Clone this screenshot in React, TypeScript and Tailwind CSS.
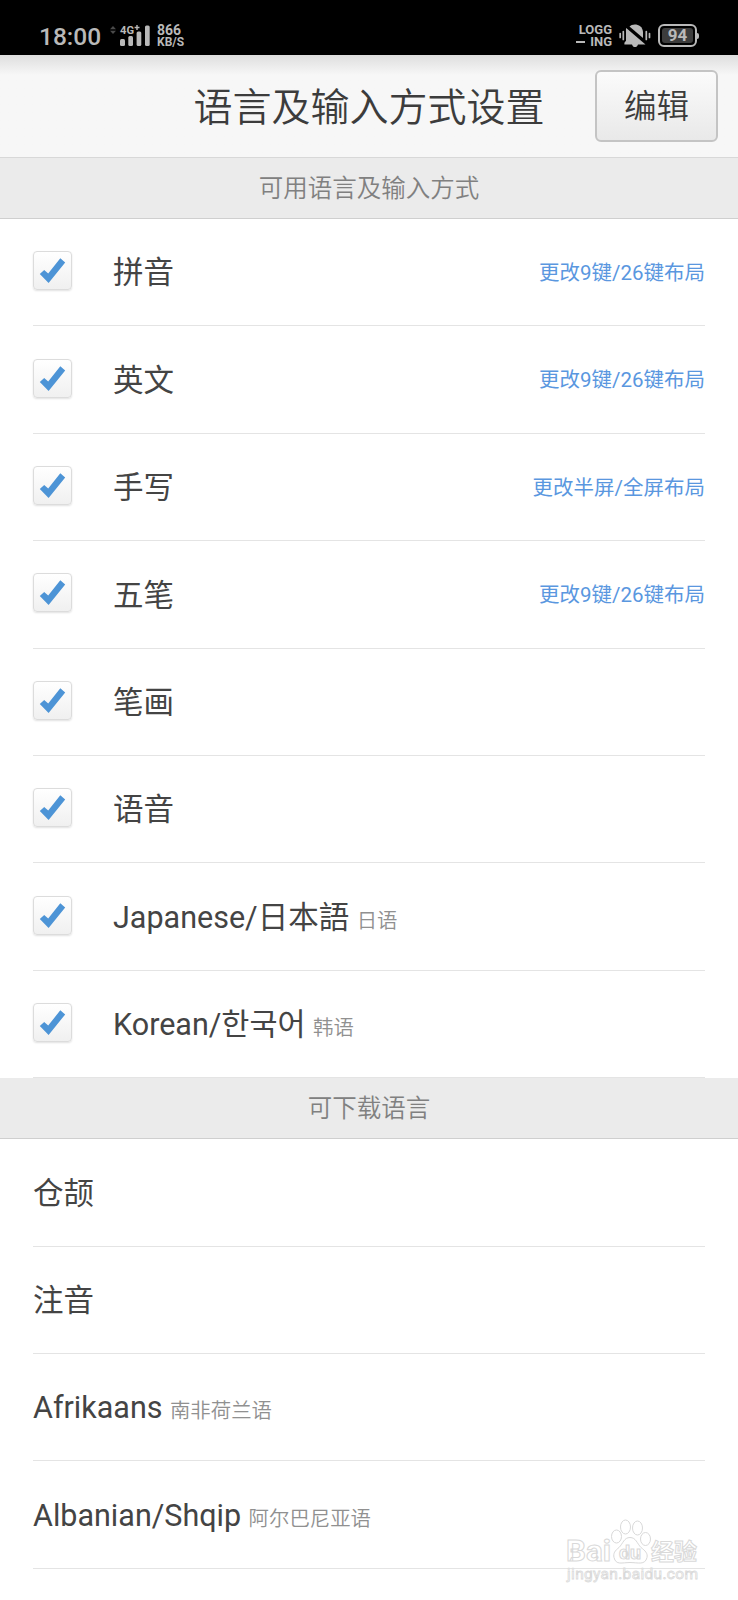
interface Language {
  name: string;
  note?: string;
  action?: string;
}

const enabledLanguages: Language[] = [
  { name: "拼音", action: "更改9键/26键布局" },
  { name: "英文", action: "更改9键/26键布局" },
  { name: "手写", action: "更改半屏/全屏布局" },
  { name: "五笔", action: "更改9键/26键布局" },
  { name: "笔画" },
  { name: "语音" },
  { name: "Japanese/日本語", note: "日语" },
  { name: "Korean/한국어", note: "韩语" },
];

const downloadableLanguages: Language[] = [
  { name: "仓颉" },
  { name: "注音" },
  { name: "Afrikaans", note: "南非荷兰语" },
  { name: "Albanian/Shqip", note: "阿尔巴尼亚语" },
];

function SignalIcon() {
  return (
    <svg width="40" height="24" viewBox="0 0 40 24" fill="#b9b9b9">
      <path d="M0 5.200 3 2l3 3.200zM0 6.800h6L3 10z" fill="#4a4a4a" />
      <text
        x="10"
        y="10"
        fontSize="11.500"
        fontWeight="700"
        textLength="14"
        lengthAdjust="spacingAndGlyphs"
      >
        4G
      </text>
      <path d="M24.600 2.800h1.700V1h1.400v1.800h1.800v1.500h-1.800V6h-1.400V4.300h-1.700z" />
      <rect x="10" y="15" width="5" height="7" rx="1.500" />
      <rect x="18.300" y="12" width="4.700" height="10" rx="1.500" />
      <rect x="26.600" y="7.500" width="4.700" height="14.500" rx="1.500" />
      <rect x="35" y="1.500" width="4.700" height="20.500" rx="1.500" />
    </svg>
  );
}

function MutedBellIcon() {
  return (
    <svg width="32" height="24" viewBox="0 0 32 24" fill="#b9b9b9">
      <path d="M10.500 2.600C13.500-1.200 23.500-.400 24 8v6z" />
      <path d="M7.200 4 26.500 20.400H19c-.800 3.400-5.200 3.400-6 0H5.400v-1.600l1.600-2V8.500c0-1.600-.200-3.300.200-4.500z" />
      <path
        d="M1.200 9.500v4M4.300 7.500v8M27.300 7.500v8M30.500 9.500v4"
        stroke="#b9b9b9"
        strokeWidth="1.700"
        strokeLinecap="round"
      />
    </svg>
  );
}

function StatusBar() {
  return (
    <div className="flex h-[55px] items-start justify-between bg-black pt-[24px] pr-[39px] pl-[39px] text-[#b9b9b9]">
      <div className="flex items-start">
        <span className="w-[71px] text-[24.5px] leading-[26px] font-medium">
          18:00
        </span>
        <SignalIcon />
        <div className="ml-[7px] font-bold">
          <div className="text-[14px] leading-[12px]">866</div>
          <div className="text-[12px] leading-[12px]">KB/S</div>
        </div>
      </div>
      <div className="flex items-start">
        <div className="w-[36px] text-right text-[13px] leading-[12px] font-bold">
          <div>LOGG</div>
          <div className="flex items-center justify-between">
            <span className="h-[2px] w-[9px] bg-[#b9b9b9]" />
            ING
          </div>
        </div>
        <div className="ml-[7px]">
          <MutedBellIcon />
        </div>
        <div className="ml-[7px] flex items-center">
          <div className="flex h-[23px] w-[39px] rounded-[6px] border-2 border-[#b9b9b9] p-[2px]">
            <div className="flex flex-1 items-center justify-center rounded-[3px] bg-[#3c3c3c] text-[17px] leading-none font-bold">
              94
            </div>
          </div>
          <div className="h-[6px] w-[2px] rounded-r bg-[#b9b9b9]" />
        </div>
      </div>
    </div>
  );
}

function Header() {
  return (
    <header className="relative flex h-[103px] items-center justify-center border-b border-[#d8d8d8] bg-linear-to-b from-[#dedede] to-[#f7f7f7] to-[20px]">
      <h1 className="pt-[4px] text-[39px] leading-none font-[350] text-[#3c3c3c]">
        语言及输入方式设置
      </h1>
      <button className="absolute top-[15px] right-[20px] h-[72px] w-[123px] rounded-[6px] border-2 border-[#c4c4c4] bg-linear-to-b from-[#fbfbfb] to-[#e9e9e9] pt-[2px] text-[32.5px] leading-none font-[350] text-[#3c3c3c]">
        编辑
      </button>
    </header>
  );
}

function SectionTitle({ children }: { children: string }) {
  return (
    <h2 className="flex h-[61px] items-center justify-center border-b border-[#cfcfcf] bg-[#ebebeb] pt-[3px] text-[24.5px] leading-none font-[350] text-[#808080]">
      {children}
    </h2>
  );
}

function Checkbox() {
  return (
    <span className="mr-[41px] mb-[3px] flex size-[39px] items-center justify-center rounded-[4px] border border-[#dcdcdc] bg-linear-to-b from-white to-[#f0f0f0] shadow-[0_1px_2px_rgba(0,0,0,0.12)]">
      <svg width="27" height="27" viewBox="0 0 27 27">
        <path
          d="M.800 17 5.200 13 9.200 16.600 21.300 1.300 26.200 5.400 9.600 26z"
          fill="#4d94d6"
        />
      </svg>
    </span>
  );
}

function LanguageRow({
  language,
  checkable,
}: {
  language: Language;
  checkable?: boolean;
}) {
  return (
    <li className="flex h-[107.4px] items-center border-b border-[#e4e4e4]">
      {checkable && <Checkbox />}
      <span className="pt-[3px] text-[30.5px] leading-none text-[#444]">
        {language.name}
        {language.note && (
          <span className="ml-[7.5px] text-[20.4px] font-[350] text-[#909090]">
            {language.note}
          </span>
        )}
      </span>
      {language.action && (
        <a className="ml-auto pt-[2px] text-[20.5px] leading-none text-[#5a97df]">
          {language.action}
        </a>
      )}
    </li>
  );
}

function Watermark() {
  return (
    <svg
      className="absolute right-[36px] bottom-[4px]"
      width="140"
      height="80"
      viewBox="0 0 140 80"
      fill="#fff"
      stroke="#d9d9d9"
      strokeWidth="1"
    >
      <ellipse cx="54.500" cy="20.500" rx="5" ry="6.500" />
      <ellipse cx="63.500" cy="11" rx="5" ry="7" />
      <ellipse cx="75.500" cy="12" rx="5" ry="7" />
      <ellipse cx="83.500" cy="23" rx="5" ry="6.500" />
      <path d="M68 21.500c6 0 7 6 11 10 4 3 7 6 6 10-2 8-9 5-17 5s-14 3-16-5c-1-4 1-7 5-10 4-4 5-10 11-10z" />
      <g fontWeight="700">
        <text
          x="4"
          y="45"
          fontSize="30"
          textLength="45"
          lengthAdjust="spacingAndGlyphs"
        >
          Bai
        </text>
        <text
          x="57"
          y="42.500"
          fontSize="18"
          textLength="22"
          lengthAdjust="spacingAndGlyphs"
        >
          du
        </text>
        <text x="89" y="44" fontSize="23" textLength="46">
          经验
        </text>
      </g>
      <text x="5" y="63" fontSize="15.500" textLength="131" strokeWidth="0.800">
        jingyan.baidu.com
      </text>
    </svg>
  );
}

export default function App() {
  return (
    <div
      lang="zh-CN"
      className="relative h-[1600px] w-[738px] overflow-hidden bg-white font-['Roboto','Noto_Sans_CJK_SC','Noto_Sans_CJK_KR',sans-serif]"
    >
      <StatusBar />
      <Header />
      <SectionTitle>可用语言及输入方式</SectionTitle>
      <ul className="px-[33px]">
        {enabledLanguages.map((language) => (
          <LanguageRow key={language.name} language={language} checkable />
        ))}
      </ul>
      <SectionTitle>可下载语言</SectionTitle>
      <ul className="px-[33px]">
        {downloadableLanguages.map((language) => (
          <LanguageRow key={language.name} language={language} />
        ))}
      </ul>
      <Watermark />
    </div>
  );
}
